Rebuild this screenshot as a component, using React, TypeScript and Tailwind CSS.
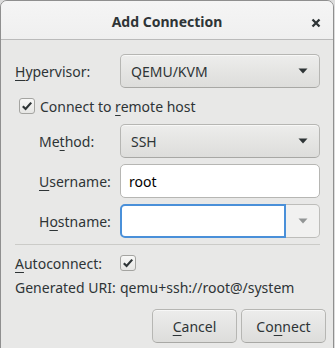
import React from "react";

const Arrow = ({ color = "#2e3436" }: { color?: string }) => (
  <svg width="10" height="6" viewBox="0 0 10 6"><path d="M0.5 0.5 H9.5 L5 5.5 Z" fill={color} /></svg>
);

const Check = () => (
  <div className="w-[16px] h-[16px] rounded-[3px] border border-[#a4a4a1] bg-gradient-to-b from-[#f8f8f7] to-[#e6e6e4] flex items-center justify-center shrink-0">
    <svg width="12" height="12" viewBox="0 0 12 12"><path d="M1.8 6.2 L4.6 9 L10.2 2.6" stroke="#2e3436" strokeWidth="2.2" fill="none" /></svg>
  </div>
);

const Combo = ({ text }: { text: string }) => (
  <div className="h-[34px] w-full rounded-[5px] border border-[#b6b6b3] border-b-[#a8a8a5] bg-gradient-to-b from-[#ededec] to-[#dddddb] flex items-center justify-between pl-[10px] pr-[11px] shadow-[inset_0_1px_0_rgba(255,255,255,0.6)]">
    <span>{text}</span>
    <Arrow />
  </div>
);

export default function App() {
  return (
    <div className="w-[335px] h-[348px] bg-[#dcdcdc] overflow-hidden text-[14px] text-[#2e3436]" style={{ fontFamily: '"Noto Sans", sans-serif' }}>
      <div className="w-[334px] h-[360px] rounded-t-[7px] border border-[#8f8f8f] bg-[#e8e8e7] overflow-hidden">
        <div className="h-[39px] border-b border-[#bababa] bg-gradient-to-b from-[#f5f5f5] to-[#efefef] relative flex items-center justify-center">
          <span className="font-bold text-[14px] mt-[3px]">Add Connection</span>
          <svg className="absolute right-[12px] top-[17px]" width="10" height="10" viewBox="0 0 10 10"><path d="M1.5 1.5 L8.5 8.5 M8.5 1.5 L1.5 8.5" stroke="#2e3436" strokeWidth="2.3" /></svg>
        </div>
        <div className="pl-[14px] pr-[13px] pt-[14px]">
          <div className="grid grid-cols-[105px_200px] items-center">
            <span><u className="underline-offset-[3px]">H</u>ypervisor:</span>
            <Combo text="QEMU/KVM" />
          </div>
          <div className="h-[24px] mt-[6px] flex items-center gap-[5px] pl-[4px]">
            <Check />
            <span>Connect to <u className="underline-offset-[3px]">r</u>emote host</span>
          </div>
          <div className="grid grid-cols-[105px_200px] items-center gap-y-[6px] mt-[6px]">
            <span className="pl-[24px]">Me<u className="underline-offset-[3px]">t</u>hod:</span>
            <Combo text="SSH" />
            <span className="pl-[24px]"><u className="underline-offset-[3px]">U</u>sername:</span>
            <div className="h-[34px] rounded-[5px] border border-[#b6b6b3] bg-white flex items-center pl-[8px] text-black">root</div>
            <span className="pl-[24px]">H<u className="underline-offset-[3px]">o</u>stname:</span>
            <div className="h-[34px] flex">
              <div className="flex-1 rounded-l-[5px] border-2 border-[#4a90d9] bg-white" />
              <div className="w-[34px] rounded-r-[5px] border border-l-0 border-[#bdbdba] bg-[#f1f1f0] flex items-center justify-center">
                <Arrow color="#929595" />
              </div>
            </div>
          </div>
          <div className="mt-[6px] h-px bg-[#cbcbc8] w-[305px]" />
          <div className="grid grid-cols-[105px_200px] items-center mt-[6px]">
            <span className="h-[24px] flex items-center"><span><u className="underline-offset-[3px]">A</u>utoconnect:</span></span>
            <Check />
            <span className="h-[24px] flex items-center">Generated URI:</span>
            <span>qemu+ssh://root@/system</span>
          </div>
          <div className="flex justify-end gap-[4px] mt-[10px] mr-[-6px]">
            <div className="w-[85px] h-[34px] rounded-[5px] border border-[#b6b6b3] border-b-[#a8a8a5] bg-gradient-to-b from-[#ededec] to-[#dddddb] flex items-center justify-center shadow-[inset_0_1px_0_rgba(255,255,255,0.6)]"><span><u className="underline-offset-[3px]">C</u>ancel</span></div>
            <div className="w-[85px] h-[34px] rounded-[5px] border border-[#b6b6b3] border-b-[#a8a8a5] bg-gradient-to-b from-[#ededec] to-[#dddddb] flex items-center justify-center shadow-[inset_0_1px_0_rgba(255,255,255,0.6)]"><span>Co<u className="underline-offset-[3px]">n</u>nect</span></div>
          </div>
        </div>
      </div>
    </div>
  );
}
